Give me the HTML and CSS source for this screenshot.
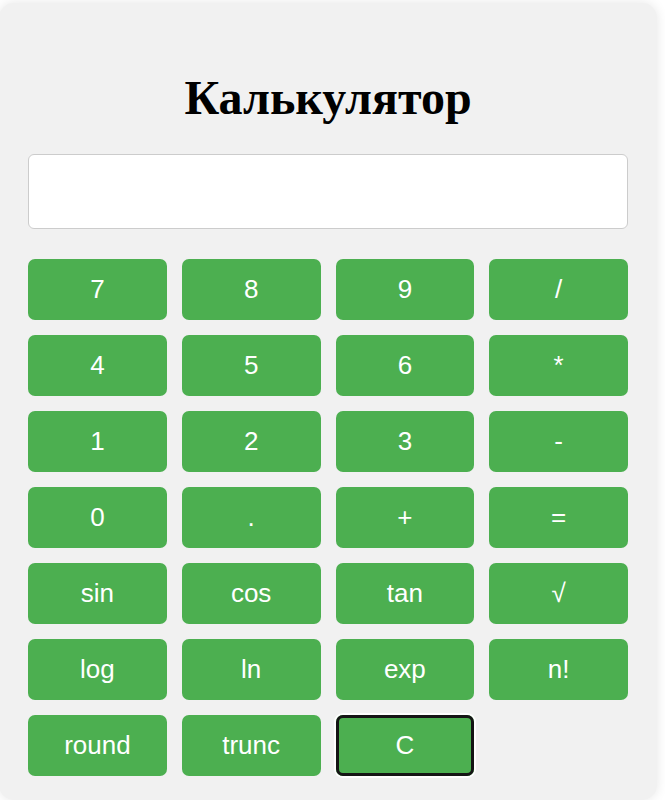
FILE: index.html
```html
<!DOCTYPE html>
<html lang="ru">
<head>
<meta charset="utf-8">
<title>Калькулятор</title>
<link rel="stylesheet" href="styles.css">
</head>
<body>
<div class="calculator">
  <h1 class="title">Калькулятор</h1>
  <input class="display" type="text">
  <div class="keys">
    <button class="key">7</button>
    <button class="key">8</button>
    <button class="key">9</button>
    <button class="key">/</button>
    <button class="key">4</button>
    <button class="key">5</button>
    <button class="key">6</button>
    <button class="key">*</button>
    <button class="key">1</button>
    <button class="key">2</button>
    <button class="key">3</button>
    <button class="key">-</button>
    <button class="key">0</button>
    <button class="key">.</button>
    <button class="key">+</button>
    <button class="key">=</button>
    <button class="key">sin</button>
    <button class="key">cos</button>
    <button class="key">tan</button>
    <button class="key">√</button>
    <button class="key">log</button>
    <button class="key">ln</button>
    <button class="key">exp</button>
    <button class="key">n!</button>
    <button class="key">round</button>
    <button class="key">trunc</button>
    <button class="key key-focused">C</button>
  </div>
</div>
</body>
</html>
```
FILE: styles.css
```css
html, body {
  margin: 0;
  padding: 0;
  background: #ffffff;
}

body {
  font-family: "Liberation Sans", Arial, sans-serif;
}

.calculator {
  box-sizing: border-box;
  width: 658px;
  margin: 3px 0 0 -1px;
  padding: 35px 29px 24px 29px;
  background: #f1f1f1;
  border-radius: 15px;
  box-shadow: 0 0 12px rgba(0, 0, 0, 0.1);
}

.title {
  font-family: "Liberation Serif", "Times New Roman", serif;
  font-size: 48px;
  font-weight: bold;
  text-align: center;
  margin: 32px 0 29px 0;
  color: #000;
}

.display {
  display: block;
  box-sizing: border-box;
  width: 100%;
  height: 75px;
  margin: 0 0 30px 0;
  border: 1px solid #cccccc;
  border-radius: 6px;
  background: #ffffff;
  font-size: 27px;
  padding: 0 15px;
}

.keys {
  display: grid;
  grid-template-columns: repeat(4, 1fr);
  gap: 15px;
}

.key {
  height: 61px;
  border: none;
  border-radius: 7px;
  background: #4caf50;
  color: #ffffff;
  font-family: "Liberation Sans", Arial, sans-serif;
  font-size: 26px;
  padding: 0;
}

.key-focused {
  box-shadow: inset 0 0 0 3px #151515, 0 0 0 2px #ffffff;
}
```
